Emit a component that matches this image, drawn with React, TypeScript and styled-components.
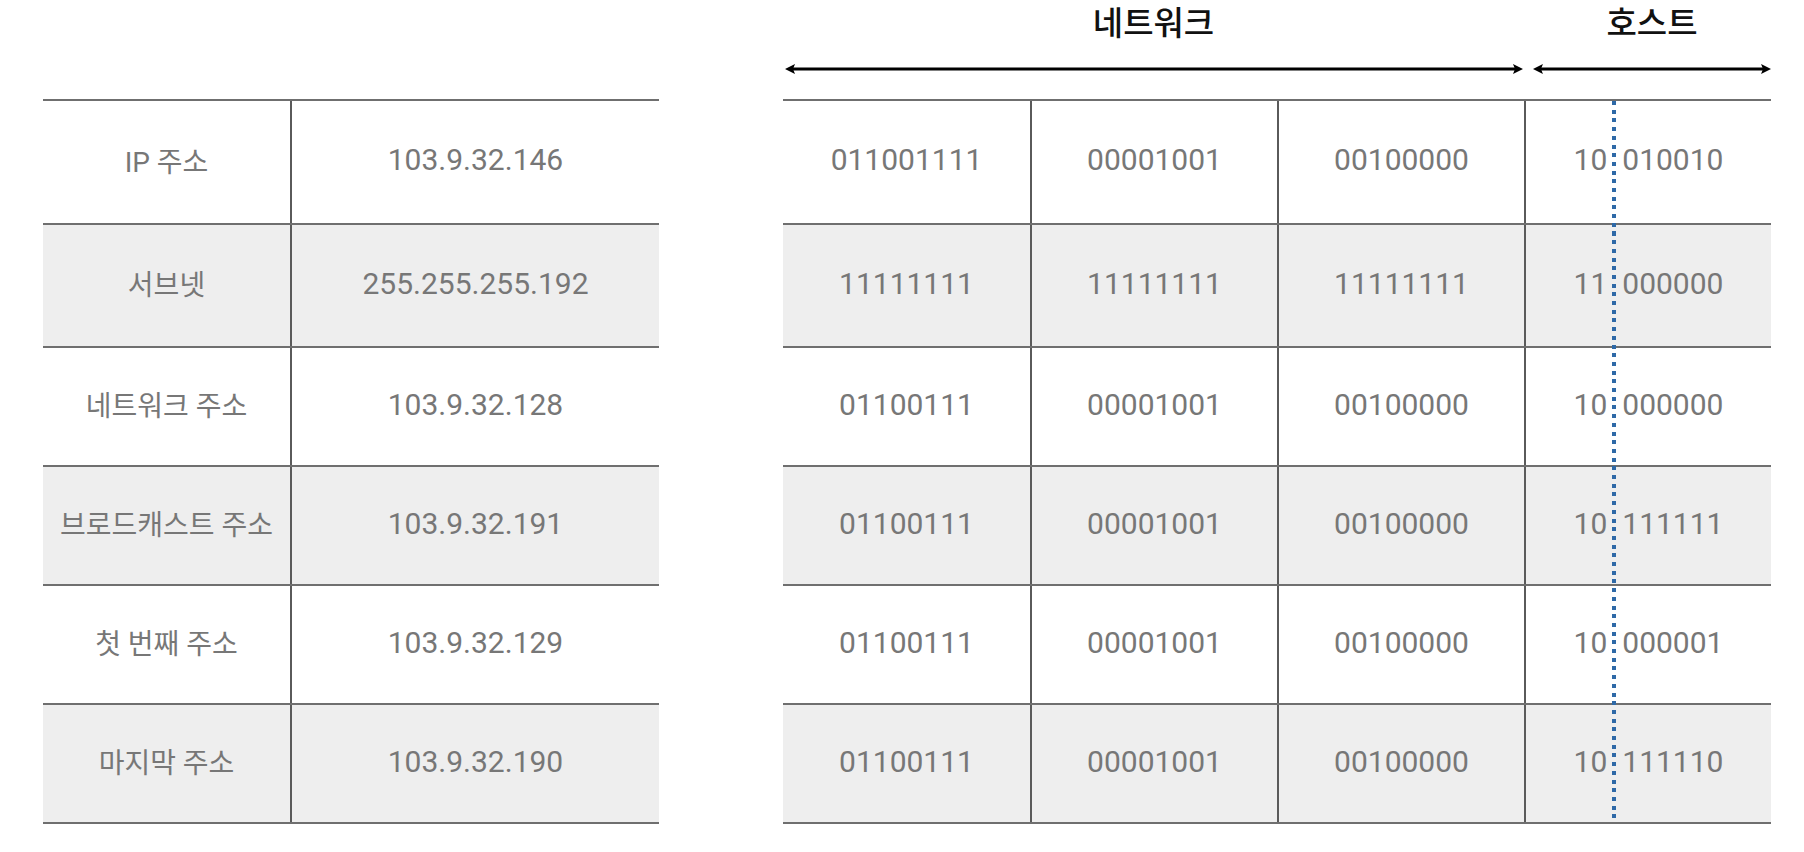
import React from "react";
import styled, { createGlobalStyle } from "styled-components";

const GlobalStyle = createGlobalStyle`
  html, body {
    margin: 0;
    padding: 0;
    background: #ffffff;
  }
  body {
    font-family: Roboto, "Noto Sans CJK KR", sans-serif;
  }
`;

const LINE = "#6f6f6f";
const TEXT = "#777777";

const Page = styled.div`
  width: 1804px;
  height: 852px;
  display: flex;
  align-items: flex-start;
  padding-left: 43px;
  box-sizing: border-box;
  gap: 124px;
`;

const LeftSection = styled.section`
  padding-top: 99px;
`;

const RightSection = styled.section`
  display: flex;
  flex-direction: column;
`;

const Header = styled.div`
  height: 99px;
  display: grid;
  grid-template-columns: 741px 247px;
  grid-template-rows: 52px 34px;
`;

const Title = styled.div<{ $shift?: number }>`
  font-family: "Noto Sans CJK KR", sans-serif;
  font-weight: 500;
  font-size: 33px;
  color: #111111;
  display: flex;
  align-items: center;
  justify-content: center;
  padding-bottom: 10px;
  padding-left: ${(p) => p.$shift ?? 0}px;
`;

const ArrowCell = styled.div<{ $inset: number }>`
  display: flex;
  align-items: center;
  padding-left: ${(p) => p.$inset}px;
`;

const Table = styled.div<{ $cols: string }>`
  position: relative;
  display: grid;
  grid-template-columns: ${(p) => p.$cols};
  border-top: 2px solid ${LINE};
`;

const Row = styled.div<{ $shade: boolean; $h: number }>`
  display: grid;
  grid-column: 1 / -1;
  grid-template-columns: subgrid;
  height: ${(p) => p.$h}px;
  box-sizing: border-box;
  border-bottom: 2px solid ${LINE};
  background: ${(p) => (p.$shade ? "#eeeeee" : "#ffffff")};
`;

const Cell = styled.div<{ $label?: boolean }>`
  display: flex;
  align-items: center;
  justify-content: center;
  gap: 15px;
  padding-bottom: 5px;
  white-space: pre;
  color: ${TEXT};
  font-size: ${(p) => (p.$label ? 28 : 30)}px;
  & + & {
    border-left: 2px solid #5a5a5a;
  }
`;

const DottedLine = styled.div<{ $left: number }>`
  position: absolute;
  left: ${(p) => p.$left}px;
  top: 0;
  bottom: 6px;
  width: 4px;
  background: repeating-linear-gradient(
    to bottom,
    #2e69a7 0 4px,
    transparent 4px 8.7px
  );
`;

const Arrow: React.FC<{ width: number }> = ({ width }) => (
  <svg width={width} height={14} viewBox={`0 0 ${width} 14`}>
    <line x1={6} y1={7} x2={width - 6} y2={7} stroke="#000" strokeWidth={3} />
    <path d="M0 7 L10 2 L8 7 L10 12 Z" fill="#000" />
    <path d={`M${width} 7 L${width - 10} 2 L${width - 8} 7 L${width - 10} 12 Z`} fill="#000" />
  </svg>
);

const heights = [124, 123, 119, 119, 119, 119];

const leftRows = [
  ["IP 주소", "103.9.32.146"],
  ["서브넷", "255.255.255.192"],
  ["네트워크 주소", "103.9.32.128"],
  ["브로드캐스트 주소", "103.9.32.191"],
  ["첫 번째 주소", "103.9.32.129"],
  ["마지막 주소", "103.9.32.190"],
];

const rightRows: [string, string, string, [string, string]][] = [
  ["011001111", "00001001", "00100000", ["10", "010010"]],
  ["11111111", "11111111", "11111111", ["11", "000000"]],
  ["01100111", "00001001", "00100000", ["10", "000000"]],
  ["01100111", "00001001", "00100000", ["10", "111111"]],
  ["01100111", "00001001", "00100000", ["10", "000001"]],
  ["01100111", "00001001", "00100000", ["10", "111110"]],
];

export default function App() {
  return (
    <>
      <GlobalStyle />
      <Page>
        <LeftSection>
          <Table $cols="247px 369px">
            {leftRows.map((r, i) => (
              <Row key={i} $shade={i % 2 === 1} $h={heights[i]}>
                <Cell $label>{r[0]}</Cell>
                <Cell>{r[1]}</Cell>
              </Row>
            ))}
          </Table>
        </LeftSection>
        <RightSection>
          <Header>
            <Title>네트워크</Title>
            <Title $shift={9}>호스트</Title>
            <ArrowCell $inset={2}>
              <Arrow width={738} />
            </ArrowCell>
            <ArrowCell $inset={9}>
              <Arrow width={239} />
            </ArrowCell>
          </Header>
          <Table $cols="247px 247px 247px 247px">
            {rightRows.map((r, i) => (
              <Row key={i} $shade={i % 2 === 1} $h={heights[i]}>
                <Cell>{r[0]}</Cell>
                <Cell>{r[1]}</Cell>
                <Cell>{r[2]}</Cell>
                <Cell>
                  <span>{r[3][0]}</span>
                  <span>{r[3][1]}</span>
                </Cell>
              </Row>
            ))}
            <DottedLine $left={829} />
          </Table>
        </RightSection>
      </Page>
    </>
  );
}
